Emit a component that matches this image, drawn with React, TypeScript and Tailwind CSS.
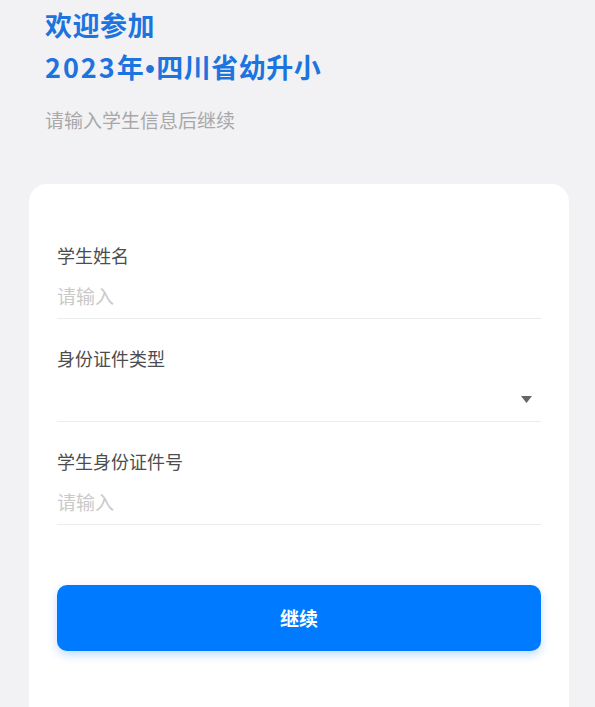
import { useState } from 'react';

const fieldFont = { fontFamily: '"Noto Sans CJK SC", "Noto Sans", sans-serif' };

function Field({ label, children }: { label: string; children: React.ReactNode }) {
  return (
    <div className="mt-[30px] first:mt-0">
      <div className="h-6 text-[18px] leading-[18px] text-[#4d4d4d]">{label}</div>
      <div className="mt-1 h-[45px] border-b border-[#ececec] flex items-center">{children}</div>
    </div>
  );
}

export default function App() {
  const [name, setName] = useState('');
  const [idNo, setIdNo] = useState('');

  return (
    <div className="min-h-[707px] bg-[#f2f2f5] pl-[29px] pr-[26px]" style={fieldFont}>
      <div className="pl-4 pt-[4px]">
        <h1 className="text-[27px] leading-[42px] font-bold text-[#1d74de] tracking-[0.5px]">
          欢迎参加
          <br />
          <span className="tracking-[2px]">2023</span>年<span className="leading-none px-[1px] font-['Liberation_Sans',sans-serif]">•</span>四川省幼升小
        </h1>
        <p className="mt-[20px] text-[19px] leading-6 text-[#a8a8a8]">请输入学生信息后继续</p>
      </div>

      <div className="mt-[52px] bg-white rounded-t-[18px] min-h-[523px] px-[28px] pt-[62px]">
        <Field label="学生姓名">
          <input
            value={name}
            onChange={(e) => setName(e.target.value)}
            placeholder="请输入"
            className="w-full text-[19px] text-[#333] placeholder:text-[#c9c9c9] outline-none bg-transparent"
          />
        </Field>
        <Field label="身份证件类型">
          <div className="flex-1" />
          <svg width="11" height="7" viewBox="0 0 11 7" className="mr-[9px]">
            <path d="M0 0 H11 L5.5 7 Z" fill="#666" />
          </svg>
        </Field>
        <Field label="学生身份证件号">
          <input
            value={idNo}
            onChange={(e) => setIdNo(e.target.value)}
            placeholder="请输入"
            className="w-full text-[19px] text-[#333] placeholder:text-[#c9c9c9] outline-none bg-transparent"
          />
        </Field>

        <button className="mt-[60px] w-full h-[66px] rounded-[10px] bg-[#007aff] text-white text-[19px] font-bold shadow-[0_4px_10px_rgba(0,122,255,0.25)]">
          继续
        </button>
      </div>
    </div>
  );
}
